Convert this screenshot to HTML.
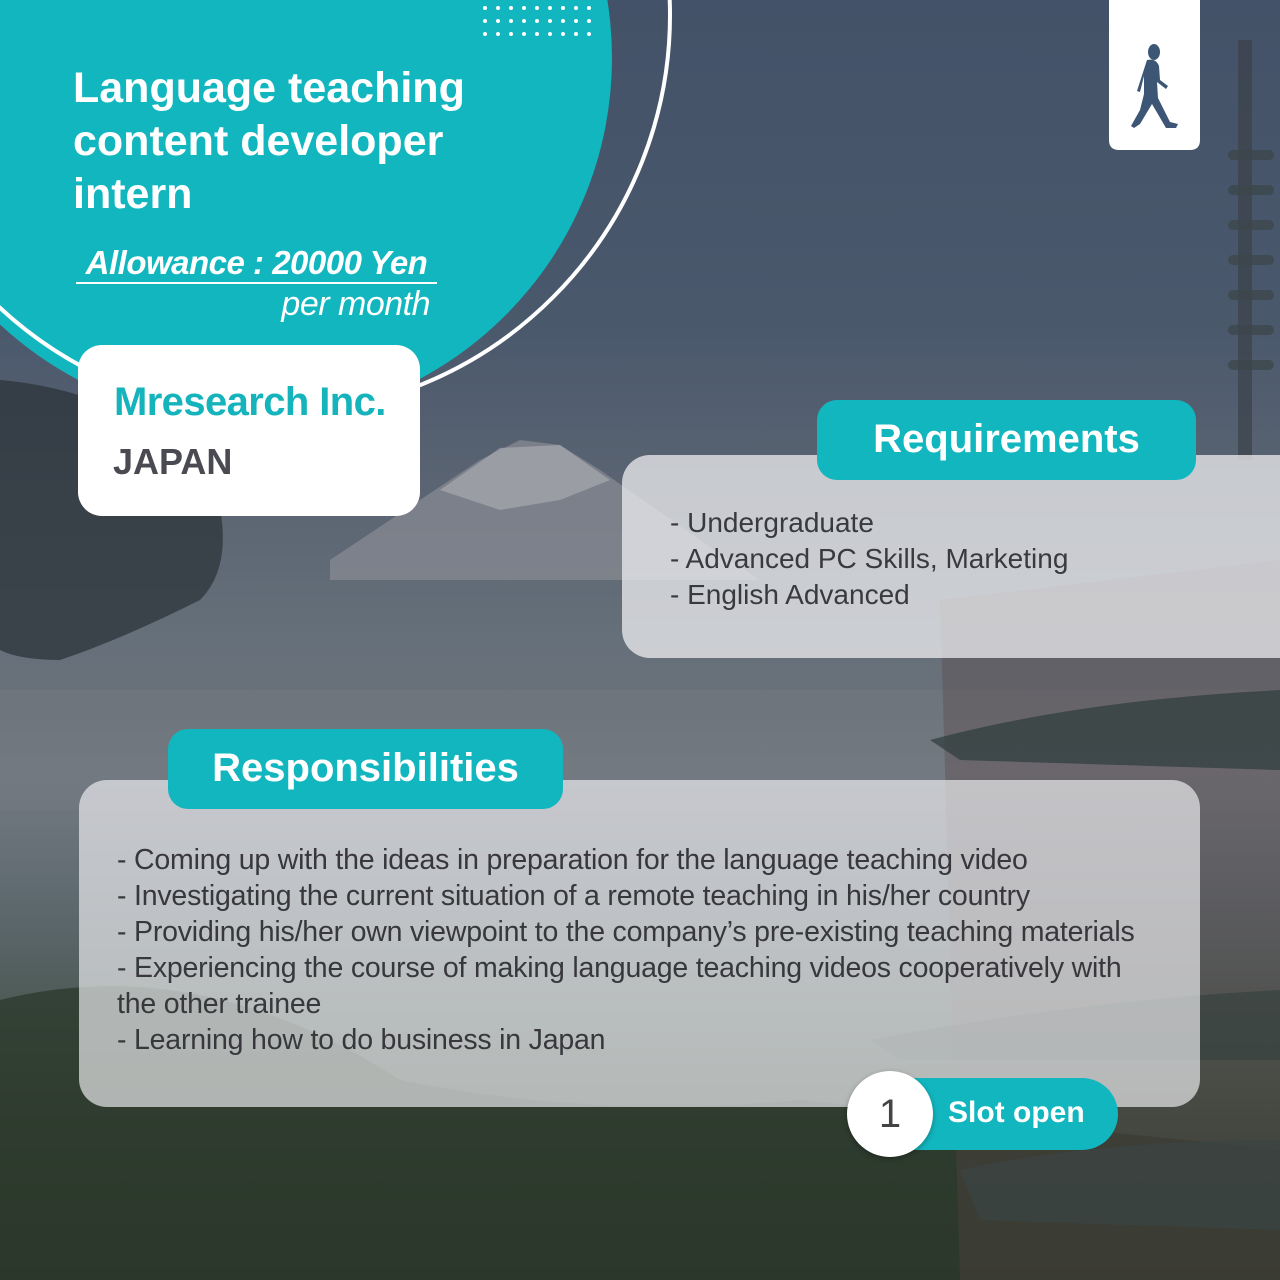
<!DOCTYPE html>
<html><head><meta charset="utf-8"><style>
*{margin:0;padding:0;box-sizing:border-box}
body{width:1280px;height:1280px;overflow:hidden;position:relative;font-family:"Liberation Sans",sans-serif;background:#3a4656}
.abs{position:absolute}
.bg{left:0;top:0;width:1280px;height:1280px;background:linear-gradient(180deg,#435268 0%,#4a586c 25%,#5a6472 38%,#66707a 50%,#6a727a 56%,#707880 60%,#6c747c 64%,#5f6a70 70%,#4a5852 80%,#3a4a3e 88%,#2e3a30 100%)}
.t{color:#fff;font-weight:bold}
.line{white-space:nowrap}
</style></head><body>
<div class="abs bg"></div>
<svg class="abs" style="left:0;top:0" width="1280" height="1280">
 <polygon points="330,560 480,460 520,440 560,445 600,470 700,540 760,580 330,580" fill="#8a8c94" opacity="0.7"/>
 <polygon points="440,490 500,448 560,445 610,480 560,500 500,510" fill="#b0b0b8" opacity="0.6"/>
 <rect x="0" y="690" width="1280" height="120" fill="#7a7f86" opacity="0.3"/>
 <path d="M0,380 Q120,390 210,470 Q240,560 200,600 Q120,640 60,660 Q20,660 0,650 Z" fill="#2a3036" opacity="0.7"/>
 <path d="M0,1000 Q200,950 400,1080 Q600,1120 800,1100 L1280,1150 L1280,1280 L0,1280 Z" fill="#2a3628" opacity="0.7"/>
 <rect x="1238" y="40" width="14" height="420" fill="#3a4248" opacity="0.7"/>
 <g fill="#3c464a" opacity="0.75">
  <rect x="1228" y="150" width="46" height="10" rx="5"/><rect x="1228" y="185" width="46" height="10" rx="5"/>
  <rect x="1228" y="220" width="46" height="10" rx="5"/><rect x="1228" y="255" width="46" height="10" rx="5"/>
  <rect x="1228" y="290" width="46" height="10" rx="5"/><rect x="1228" y="325" width="46" height="10" rx="5"/>
  <rect x="1228" y="360" width="46" height="10" rx="5"/>
 </g>
 <path d="M940,600 L1280,560 L1280,1280 L960,1280 Z" fill="#5a4444" opacity="0.35"/>
 <path d="M930,740 Q1080,700 1280,690 L1280,770 L960,760 Z" fill="#2e3c3c" opacity="0.7"/>
 <path d="M870,1040 Q1080,1000 1280,990 L1280,1060 L900,1060 Z" fill="#34403e" opacity="0.6"/>
 <path d="M960,1170 Q1100,1140 1280,1140 L1280,1230 L980,1220 Z" fill="#3a4444" opacity="0.7"/>
 <circle cx="248" cy="58" r="364" fill="#12b6bf"/>
 <circle cx="271" cy="15" r="399" fill="none" stroke="#fff" stroke-width="4"/>
 <g fill="#fff">
  <g id="r"><circle cx="485" cy="8" r="2"/><circle cx="498" cy="8" r="2"/><circle cx="511" cy="8" r="2"/><circle cx="524" cy="8" r="2"/><circle cx="537" cy="8" r="2"/><circle cx="550" cy="8" r="2"/><circle cx="563" cy="8" r="2"/><circle cx="576" cy="8" r="2"/><circle cx="589" cy="8" r="2"/></g>
  <use href="#r" y="13"/><use href="#r" y="26"/>
 </g>
 <path d="M1109,0 H1200 V140 Q1200,150 1190,150 H1119 Q1109,150 1109,140 Z" fill="#fff"/>
 <g fill="#3d5675">
  <ellipse cx="1154" cy="52" rx="6" ry="8"/>
  <path d="M1147,60 Q1156,58 1159,66 L1160,80 L1168,86 L1166,89 L1157,82 L1158,98 L1170,122 L1178,124 L1176,128 L1166,128 L1152,104 L1140,124 L1134,128 L1131,126 L1140,110 L1144,94 L1144,76 L1140,92 L1137,91 Z"/>
 </g>
</svg>
<div class="abs t" style="left:73px;top:62px;font-size:43px;line-height:53px">Language teaching<br>content developer<br>intern</div>
<div class="abs t" style="left:76px;top:244px;font-size:33px;font-style:italic;border-bottom:2px solid #fff;width:361px;text-align:center;line-height:38px;white-space:nowrap;letter-spacing:-0.5px">Allowance : 20000 Yen</div>
<div class="abs" style="left:230px;top:285px;width:200px;text-align:right;color:#fff;font-size:34px;font-style:italic;letter-spacing:-0.5px">per month</div>
<div class="abs" style="left:78px;top:345px;width:342px;height:171px;background:#fff;border-radius:24px"></div>
<div class="abs line" style="left:114px;top:380px;font-size:40px;color:#15b3bb;font-weight:bold;letter-spacing:-0.6px">Mresearch Inc.</div>
<div class="abs line" style="left:113px;top:441px;font-size:36px;color:#4a4a52;font-weight:bold">JAPAN</div>

<div class="abs" style="left:622px;top:455px;width:700px;height:203px;background:rgba(238,238,240,0.75);border-radius:28px"></div>
<div class="abs" style="left:817px;top:400px;width:379px;height:80px;background:#12b6bf;border-radius:20px;color:#fff;font-weight:bold;font-size:40px;text-align:center;line-height:78px">Requirements</div>
<div class="abs" style="left:670px;top:505px;font-size:28px;color:#3a3a3e;line-height:36px">
<div class="line">- Undergraduate</div><div class="line">- Advanced PC Skills, Marketing</div><div class="line">- English Advanced</div></div>

<div class="abs" style="left:79px;top:780px;width:1121px;height:327px;background:rgba(238,238,240,0.68);border-radius:28px"></div>
<div class="abs" style="left:168px;top:729px;width:395px;height:80px;background:#12b6bf;border-radius:20px;color:#fff;font-weight:bold;font-size:40px;text-align:center;line-height:78px">Responsibilities</div>
<div class="abs" style="left:117px;top:842px;font-size:28.5px;color:#38383c;line-height:36px;letter-spacing:-0.2px">
<div class="line">- Coming up with the ideas in preparation for the language teaching video</div>
<div class="line">- Investigating the current situation of a remote teaching in his/her country</div>
<div class="line">- Providing his/her own viewpoint to the company’s pre-existing teaching materials</div>
<div class="line">- Experiencing the course of making language teaching videos cooperatively with</div>
<div class="line">the other trainee</div>
<div class="line">- Learning how to do business in Japan</div></div>

<div class="abs" style="left:880px;top:1078px;width:238px;height:72px;background:#12b6bf;border-radius:36px"></div>
<div class="abs t" style="left:948px;top:1096px;font-size:30px;white-space:nowrap">Slot open</div>
<div class="abs" style="left:847px;top:1071px;width:86px;height:86px;border-radius:50%;background:#fff;box-shadow:0 2px 6px rgba(0,0,0,0.3);text-align:center;line-height:86px;font-size:40px;color:#444">1</div>
</body></html>
